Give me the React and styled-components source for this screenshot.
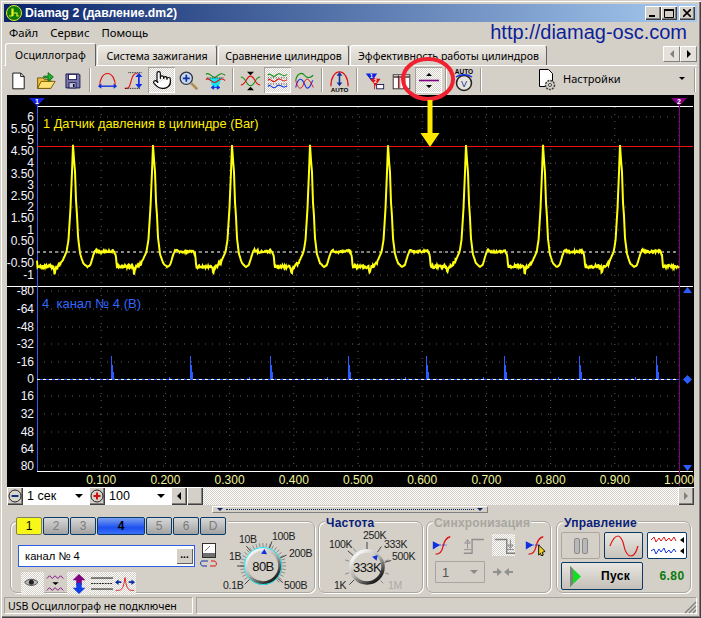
import React from "react";
import styled, { createGlobalStyle } from "styled-components";
import { Pointer } from "lucide-react";

const FACE = "#d4d0c8";
const DITHER = `repeating-conic-gradient(#ffffff 0 25%, ${FACE} 0 50%) 0 0 / 2px 2px`;
const UI_FONT = `"Noto Sans", "DejaVu Sans", sans-serif`;

const GlobalStyle = createGlobalStyle`
  html, body { margin: 0; padding: 0; background: ${FACE}; }
  * { box-sizing: border-box; }
`;

const Window = styled.div`
  position: relative;
  width: 701px;
  height: 618px;
  padding: 4px;
  display: flex;
  flex-direction: column;
  background: ${FACE};
  font-family: ${UI_FONT};
  font-size: 11px;
  color: #000;
  overflow: hidden;
  box-shadow: inset 1px 1px 0 ${FACE}, inset 2px 2px 0 #fff, inset -1px -1px 0 #404040, inset -2px -2px 0 #808080;
`;

const TitleBar = styled.div`
  height: 18px;
  flex: none;
  display: flex;
  align-items: center;
  padding: 0 2px;
  background: linear-gradient(90deg, #0a246a, #a6caf0);
  color: #fff;
  font-family: "Liberation Sans", sans-serif;
  font-weight: 700;
  font-size: 12.2px;
  gap: 3px;
`;

const TitleButtons = styled.div`
  margin-left: auto;
  display: flex;
`;

const CaptionButton = styled.div`
  width: 16px;
  height: 14px;
  margin-left: ${(p) => (p.$gap ? "2px" : "0")};
  display: flex;
  align-items: center;
  justify-content: center;
  background: ${FACE};
  box-shadow: inset 1px 1px 0 #fff, inset -1px -1px 0 #404040, inset -2px -2px 0 #808080;
`;

const MenuRow = styled.div`
  height: 21px;
  flex: none;
  display: flex;
  align-items: center;
  padding-left: 5px;
  gap: 12px;
  font-size: 11.3px;
`;

const Url = styled.div`
  margin-left: auto;
  margin-right: 10px;
  font-family: "Liberation Sans", sans-serif;
  font-size: 20px;
  color: #0c1f9a;
`;

const TabRow = styled.div`
  height: 23px;
  flex: none;
  display: flex;
  align-items: flex-end;
  padding-left: 1px;
  gap: 1px;
  border-bottom: 1px solid #fff;
`;

const Tab = styled.div`
  width: ${(p) => p.$w}px;
  height: ${(p) => (p.$active ? 23 : 20)}px;
  margin-bottom: ${(p) => (p.$active ? -1 : 0)}px;
  display: flex;
  align-items: center;
  justify-content: center;
  white-space: nowrap;
  font-size: 10.6px;
  letter-spacing: ${(p) => (p.$active ? 0.1 : 0)}px;
  background: ${(p) => (p.$active ? FACE : "linear-gradient(#ece9e2, #d4d0c8)")};
  border: 1px solid #fff;
  border-right-color: #606060;
  border-bottom: none;
  border-radius: 3px 3px 0 0;
  position: relative;
`;

const TabArrows = styled.div`
  margin-left: auto;
  margin-bottom: 3px;
  display: flex;
  height: 16px;
`;

const TabArrow = styled.div`
  width: 17px;
  height: 16px;
  background: #e4e1da;
  border: 1px solid #fff;
  border-right-color: #808080;
  border-bottom-color: #808080;
  display: flex;
  align-items: center;
  justify-content: center;
`;

const Toolbar = styled.div`
  height: 28px;
  flex: none;
  display: flex;
  align-items: center;
  padding-left: 1px;
`;

const ToolButton = styled.div`
  width: ${(p) => p.$w || 27}px;
  height: 26px;
  flex: none;
  display: flex;
  align-items: center;
  justify-content: center;
  background: ${(p) => (p.$on ? DITHER : "transparent")};
  box-shadow: ${(p) => (p.$on ? "inset 1px 1px 0 #a5a29b, inset -1px -1px 0 #fff" : "none")};
`;

const ToolSep = styled.div`
  width: 2px;
  height: 24px;
  flex: none;
  margin: 0 ${(p) => p.$m || 3}px;
  border-left: 1px solid #9d9a93;
  border-right: 1px solid #fff;
`;

const SettingsButton = styled.div`
  flex: 1;
  height: 26px;
  display: flex;
  align-items: center;
  padding: 0 8px 3px 49px;
  gap: 5px;
  font-size: 11px;
`;

const Caret = styled.div`
  margin-left: auto;
  width: 0;
  height: 0;
  border-left: ${(p) => (p.$big ? 4 : 3)}px solid transparent;
  border-right: ${(p) => (p.$big ? 4 : 3)}px solid transparent;
  border-top: ${(p) => (p.$big ? 4 : 3)}px solid #000;
`;

const ChartBox = styled.div`
  height: 392px;
  margin: 1px 0 0 3px;
  width: 687px;
  flex: none;
  background: #000;
`;

const ChartSvg = styled.svg`
  display: block;
`;

const ControlRow = styled.div`
  height: 18px;
  flex: none;
  margin-left: 3px;
  width: 687px;
  display: flex;
  background: ${DITHER};
`;

const RaisedButton = styled.div`
  width: ${(p) => p.$w || 16}px;
  height: 18px;
  flex: none;
  display: flex;
  align-items: center;
  justify-content: center;
  background: ${FACE};
  box-shadow: inset 1px 1px 0 #fff, inset -1px -1px 0 #404040, inset -2px -2px 0 #808080;
`;

const ComboBox = styled.div`
  width: 66px;
  height: 18px;
  flex: none;
  display: flex;
  align-items: center;
  padding: 0 6px 0 4px;
  background: #fff;
  font-size: 12.5px;
  font-family: "Liberation Sans", sans-serif;
`;

const Track = styled.div`
  flex: 1;
`;

const SplitterRow = styled.div`
  height: 8px;
  flex: none;
  display: flex;
  justify-content: center;
  margin-top: 1px;
`;

const Splitter = styled.div`
  width: 276px;
  height: 7px;
  margin-left: -2px;
  padding: 0 4px;
  display: flex;
  align-items: center;
  gap: 3px;
  border: 1px solid;
  border-color: #fff #808080 #808080 #fff;
`;

const SplitterDots = styled.div`
  flex: 1;
  height: 0;
  border-top: 1px dotted #0a246a;
`;

const SplitterMark = styled.div`
  width: 0;
  height: 0;
  border-left: 3px solid transparent;
  border-right: 3px solid transparent;
  border-top: 3px solid #0a246a;
`;

const GroupsRow = styled.div`
  flex: none;
  height: 83px;
  display: flex;
  padding: 7px 0 0 6px;
  gap: 3px;
`;

const Group = styled.div`
  width: ${(p) => p.$w}px;
  height: 72px;
  flex: none;
  border: 1px solid #aaa79f;
  border-radius: 7px;
  margin-right: ${(p) => p.$mr || 0}px;
  box-shadow: 1px 1px 0 #fff, inset 1px 1px 0 #fff;
`;

const GroupTitle = styled.div`
  width: fit-content;
  margin: -6px 0 0 6px;
  padding: 0 1px;
  height: 14px;
  line-height: 14px;
  font-family: "Liberation Sans", sans-serif;
  font-weight: 700;
  font-size: 12px;
  letter-spacing: 0.2px;
  background: ${FACE};
  color: ${(p) => (p.$off ? "#a9a69f" : "#0a1f78")};
`;

const ChannelGroupInner = styled.div`
  display: flex;
  height: 100%;
`;

const ChannelColumn = styled.div`
  width: 211px;
  flex: none;
`;

const ChannelTabs = styled.div`
  display: flex;
  gap: 1px;
  margin: -5px 0 0 5px;
  width: 212px;
  background: ${FACE};
`;

const ChannelButton = styled.div`
  width: ${(p) => (p.$wide ? 48 : 26)}px;
  height: 18px;
  flex: none;
  display: flex;
  align-items: center;
  justify-content: center;
  font-family: "Liberation Sans", sans-serif;
  font-size: 12px;
  font-weight: ${(p) => (p.$wide ? 700 : 400)};
  border: 1px solid ${(p) => (p.$yellow ? "#808060" : "#0a3a6a")};
  border-radius: 2px;
  color: ${(p) => (p.$yellow || p.$wide ? "#000" : "#7c7c7c")};
  background: ${(p) =>
    p.$yellow
      ? "#f8f818"
      : p.$wide
      ? "linear-gradient(#7aa0f0, #1c50f0 60%, #3c70f8)"
      : "linear-gradient(#d8d8d8, #a2a2a2)"};
`;

const InputRow = styled.div`
  display: flex;
  align-items: center;
  margin: 7px 0 0 7px;
  gap: 5px;
`;

const NameInput = styled.div`
  width: 177px;
  height: 22px;
  flex: none;
  display: flex;
  align-items: center;
  justify-content: space-between;
  padding: 1px 1px 1px 6px;
  background: #fff;
  border: 1px solid #2a5ce8;
  font-family: "Liberation Sans", sans-serif;
  font-size: 11.2px;
`;

const DotsButton = styled.div`
  width: 17px;
  height: 16px;
  display: flex;
  align-items: center;
  justify-content: center;
  padding-bottom: 4px;
  background: ${FACE};
  font-size: 10px;
  font-weight: 700;
  box-shadow: inset 1px 1px 0 #fff, inset -1px -1px 0 #606060;
`;

const ChannelIcons = styled.div`
  display: flex;
  margin: 2px 0 0 10px;
  gap: 0;
`;

const ChannelIcon = styled.div`
  width: 23px;
  height: 23px;
  display: flex;
  align-items: center;
  justify-content: center;
  background: ${(p) => (p.$on ? DITHER : "transparent")};
`;

const SyncIcons = styled.div`
  display: flex;
  align-items: center;
  gap: 8px;
  margin: 4px 0 0 0;
  padding-left: 3px;
`;

const SyncIcon = styled.div`
  width: 23px;
  height: 22px;
  display: flex;
  align-items: center;
  justify-content: center;
  background: ${(p) => (p.$on ? DITHER : "transparent")};
`;

const SyncRow = styled.div`
  display: flex;
  align-items: center;
  gap: 8px;
  margin: 5px 0 0 8px;
`;

const SyncSelect = styled.div`
  width: 50px;
  height: 22px;
  display: flex;
  align-items: center;
  justify-content: space-between;
  padding: 0 6px;
  border: 1px solid #a9a69f;
  font-family: "Liberation Sans", sans-serif;
  font-size: 13px;
  color: #555;
`;

const GreyCaret = styled.div`
  width: 0;
  height: 0;
  border-left: 4px solid transparent;
  border-right: 4px solid transparent;
  border-top: 4px solid #8a8a8a;
`;

const ControlGrid = styled.div`
  display: grid;
  grid-template-columns: 39px 39px 40px;
  column-gap: 4px;
  row-gap: 3px;
  margin: 2px 0 0 4px;
`;

const ModeButton = styled.div`
  height: 27px;
  display: flex;
  align-items: center;
  justify-content: center;
  border: 1px solid ${(p) => (p.$plain ? "#aaa79f" : "#0a3a6a")};
  border-radius: 2px;
  background: ${(p) => (p.$white ? "#fff" : p.$plain ? FACE : "linear-gradient(#e8e6e0, #c8c4bc)")};
`;

const StartButton = styled.div`
  grid-column: span 2;
  height: 28px;
  display: flex;
  align-items: center;
  border: 1px solid #0a3a6a;
  border-radius: 2px;
  padding-left: 8px;
  background: linear-gradient(#e8e6e0, #c4c0b8);
  font-family: "Liberation Sans", sans-serif;
  font-size: 12px;
  font-weight: 700;
  letter-spacing: 0.4px;
`;

const StartLabel = styled.span`
  margin-left: 20px;
`;

const Reading = styled.div`
  display: flex;
  align-items: center;
  justify-content: center;
  padding-left: 10px;
  font-family: "Liberation Sans", sans-serif;
  font-weight: 700;
  font-size: 12px;
  letter-spacing: 0.4px;
  color: #0a7a0a;
`;

const StatusBar = styled.div`
  height: 17px;
  flex: none;
  display: flex;
  gap: 3px;
  position: relative;
`;

const StatusPanel = styled.div`
  width: ${(p) => (p.$w ? `${p.$w}px` : "auto")};
  flex: ${(p) => (p.$w ? "none" : 1)};
  display: flex;
  align-items: center;
  padding-left: 3px;
  font-size: 10.6px;
  white-space: nowrap;
  border: 1px solid;
  border-color: #a5a29b #fff #fff #a5a29b;
`;

const Grip = styled.svg`
  position: absolute;
  right: 0;
  bottom: 0;
`;

const Overlay = styled.svg`
  position: absolute;
  left: 0;
  top: 0;
  pointer-events: none;
`;

// ---- chart data, all coordinates are page pixels, shapes are shifted by the box offset
const OX = 7;
const OY = 95;
const X0 = 37;
const X1 = 679;
const PEAKS = [73, 153, 232, 310, 388, 466, 543, 620];
const SPIKES = [111, 190, 270, 348, 426, 504, 579, 656];
const PERIOD = 78.5;

const SHAPE = [
  [0, 145], [1, 160], [2, 172], [3, 202], [4, 216], [5, 238], [7, 254], [10, 263], [14, 267],
  [17, 265], [20, 255], [22, 250], [27, 252], [40, 251], [42, 255], [43, 267], [52, 266],
  [59, 267], [60, 274], [61, 268], [67, 263], [72, 252], [74, 240], [76, 208], [77.5, 172], [78.5, 145],
];

function rnd(i) {
  const v = Math.sin(i * 12.9898) * 43758.5453;
  return v - Math.floor(v);
}

function shapeAt(t) {
  for (let i = 1; i < SHAPE.length; i++) {
    if (t <= SHAPE[i][0]) {
      const [a, ya] = SHAPE[i - 1];
      const [b, yb] = SHAPE[i];
      return ya + ((yb - ya) * (t - a)) / (b - a);
    }
  }
  return SHAPE[SHAPE.length - 1][1];
}

function phase(x) {
  if (x < PEAKS[0]) return PERIOD - (PEAKS[0] - x);
  for (let k = 0; k < PEAKS.length - 1; k++) {
    if (x < PEAKS[k + 1]) return ((x - PEAKS[k]) / (PEAKS[k + 1] - PEAKS[k])) * PERIOD;
  }
  return x - PEAKS[PEAKS.length - 1];
}

function pressureLine() {
  const pts = [];
  let n = 0;
  for (let x = X0; x <= X1; x += 0.5) {
    const t = phase(x);
    const noisy = t > 44 && t < 68 ? 3.4 : t > 22 && t < 42 ? 2 : 0.6;
    pts.push(`${x},${(shapeAt(t) + (rnd(n++) - 0.5) * noisy).toFixed(1)}`);
  }
  return pts.join(" ");
}

const PRESSURE = pressureLine();

const LEFT_TICKS = [
  ["6", 117], ["5.50", 129], ["5", 140], ["4.50", 151], ["4", 163], ["3.50", 174], ["3", 185], ["2.50", 196],
  ["2", 207], ["1.50", 218], ["1", 230], ["0.50", 241], ["0", 252], ["-0.50", 263], ["-1", 275],
];
const LOW_TICKS = [
  ["-80", 291], ["-64", 309], ["-48", 327], ["-32", 344], ["-16", 362], ["0", 379],
  ["16", 396], ["32", 414], ["48", 432], ["64", 449], ["80", 466],
];
const TIMES = [0.1, 0.2, 0.3, 0.4, 0.5, 0.6, 0.7, 0.8, 0.9, 1.0];

const AxisText = ({ x, y, children, anchor = "end", fill = "#f4f4ff" }) => (
  <text x={x - OX} y={y + 4 - OY} textAnchor={anchor} fill={fill} fontFamily="Liberation Sans, sans-serif" fontSize="12">
    {children}
  </text>
);

const Scope = () => (
  <ChartSvg width="687" height="392" viewBox="0 0 687 392">
    <g transform={`translate(${-OX} ${-OY})`}>
      {/* grid */}
      {TIMES.map((t) => {
        const x = X0 + 64.2 * (t * 10);
        return (
          <React.Fragment key={t}>
            <line x1={x} x2={x} y1="107" y2="285" stroke="#606060" strokeDasharray="1 6" />
            <line x1={x} x2={x} y1="288" y2="470" stroke="#606060" strokeDasharray="1 6" />
          </React.Fragment>
        );
      })}
      {LEFT_TICKS.filter((_, i) => i % 2 === 0).map(([, y]) => (
        <line key={y} x1={X0} x2={X1} y1={y} y2={y} stroke="#606060" strokeDasharray="1 6" />
      ))}
      {LOW_TICKS.map(([, y]) => (
        <line key={y} x1={X0} x2={X1} y1={y} y2={y} stroke="#606060" strokeDasharray="1 6" />
      ))}

      {/* frame lines */}
      <line x1={X0} x2="693" y1="106.5" y2="106.5" stroke="#fff" />
      <line x1="7" x2="693" y1="286.5" y2="286.5" stroke="#fff" />
      <line x1={X0} x2="693" y1="471.5" y2="471.5" stroke="#fff" />
      <line x1={X0 + 0.5} x2={X0 + 0.5} y1="100" y2="286" stroke="#2a5cff" />
      <line x1={X0 + 0.5} x2={X0 + 0.5} y1="286" y2="471" stroke="#2a5cff" />
      <line x1={X1 + 0.5} x2={X1 + 0.5} y1="100" y2="486" stroke="#800080" />

      {/* channel 1 */}
      <line x1={X0} x2={X1} y1="252" y2="252" stroke="#fff" strokeDasharray="3 3" />
      <line x1={X0} x2="693" y1="146.5" y2="146.5" stroke="#f01010" />
      <polyline points={PRESSURE} fill="none" stroke="#ffff10" strokeWidth="2" />

      {/* channel 4 */}
      <line x1={X0} x2={X1} y1="379.5" y2="379.5" stroke="#2a5cff" />
      <line x1={X0} x2={X1} y1="379.5" y2="379.5" stroke="#fff" strokeDasharray="3 3" />
      {SPIKES.map((x) => (
        <path
          key={x}
          d={`M${x + 0.5} 379V356M${x + 1.5} 379V365M${x + 2.5} 379V372M${x - 20.5} 379V377`}
          stroke="#2a5cff"
          fill="none"
        />
      ))}

      {/* markers */}
      <path d="M29 98h16l-8 8z" fill="#1020e0" />
      <path d="M671 98h16l-8 8z" fill="#800080" />
      <path d="M683 293l4.5-6 4.5 6z" fill="#2a5cff" />
      <path d="M687.5 375l4.5 4.5-4.5 4.5-4.5-4.5z" fill="#2a5cff" />
      <path d="M683 465h9l-4.5 6z" fill="#2a5cff" />
    </g>

    {/* axes */}
    {LEFT_TICKS.map(([t, y]) => (
      <AxisText key={t} x={34} y={y}>{t}</AxisText>
    ))}
    {LOW_TICKS.map(([t, y]) => (
      <AxisText key={t} x={34} y={y}>{t}</AxisText>
    ))}
    {TIMES.map((t) => (
      <AxisText key={t} x={X0 + 64.2 * (t * 10)} y={480} anchor="middle" fill="#f0f49c">
        {t.toFixed(3)}
      </AxisText>
    ))}
    <text x={43 - OX} y={128 - OY} fill="#fff000" fontFamily="Liberation Sans, sans-serif" fontSize="12.8">
      1 Датчик давления в цилиндре (Bar)
    </text>
    <text x={42 - OX} y={308 - OY} fill="#3366ff" fontFamily="Liberation Sans, sans-serif" fontSize="13" xmlSpace="preserve">
      4  канал № 4 (В)
    </text>
    <text x={37 - OX} y={104 - OY} textAnchor="middle" fill="#fff" fontSize="7" fontWeight="700" fontFamily="Liberation Sans, sans-serif">1</text>
    <text x={679 - OX} y={104 - OY} textAnchor="middle" fill="#fff" fontSize="7" fontWeight="700" fontFamily="Liberation Sans, sans-serif">2</text>
  </ChartSvg>
);

// ---- knobs
const polar = (cx, cy, r, deg) => {
  const a = ((deg - 90) * Math.PI) / 180;
  return [cx + r * Math.cos(a), cy + r * Math.sin(a)];
};

const Knob = ({ w, h, cx, cy, r, value, cyan, pointer, labels, long }) => {
  const ticks = [];
  for (let d = -135; d <= 135; d += 9) {
    const [x1, y1] = polar(cx, cy, r + 2, d);
    const [x2, y2] = polar(cx, cy, r + 6, d);
    ticks.push(<line key={d} x1={x1} y1={y1} x2={x2} y2={y2} stroke="#8a8a8a" />);
  }
  const [px, py] = polar(cx, cy, r - 3, pointer);
  return (
    <svg width={w} height={h} viewBox={`0 0 ${w} ${h}`}>
      <defs>
        <linearGradient id={`ring${r}`} x1="0.2" y1="0.1" x2="0.8" y2="0.9">
          <stop offset="0" stopColor="#f4f4f4" />
          <stop offset="0.5" stopColor="#b0aea8" />
          <stop offset="1" stopColor="#202020" />
        </linearGradient>
      </defs>
      {cyan && ticks}
      {long.map((d) => {
        const [x1, y1] = polar(cx, cy, r + 2, d);
        const [x2, y2] = polar(cx, cy, r + 9, d);
        return <line key={d} x1={x1} y1={y1} x2={x2} y2={y2} stroke="#444" />;
      })}
      {!cyan &&
        [-108, -72, -36, 36, 72, 108, 135].map((d) => {
          const [x1, y1] = polar(cx, cy, r + 3, d);
          const [x2, y2] = polar(cx, cy, r + 7, d);
          return <line key={d} x1={x1} y1={y1} x2={x2} y2={y2} stroke="#8a8a8a" />;
        })}
      <circle cx={cx} cy={cy} r={r} fill="none" stroke={`url(#ring${r})`} strokeWidth="3.5" />
      {cyan && <circle cx={cx} cy={cy} r={r + 1.5} fill="none" stroke="#20e8f0" />}
      <polygon
        points={`${px - 3},${py + 2} ${px + 3},${py + 2} ${px},${py - 3}`}
        fill="#1030e0"
        transform={`rotate(${pointer} ${px} ${py})`}
      />
      <text x={cx} y={cy + 5} textAnchor="middle" fontFamily="Liberation Sans, sans-serif" fontSize="13" letterSpacing="-0.6" fill="#111">
        {value}
      </text>
      {labels.map(([t, x, y, off]) => (
        <text key={t} x={x} y={y} fontFamily="Liberation Sans, sans-serif" fontSize="10.5" letterSpacing="-0.3" fill={off ? "#aaa" : "#222"}>
          {t}
        </text>
      ))}
    </svg>
  );
};

// ---- icons
const Ico = ({ s = 21, children }) => (
  <svg width={s} height={s} viewBox="0 0 24 24" fill="none">{children}</svg>
);

const IcoNew = () => (
  <Ico><path d="M5.5 3.5h9l4 4v14h-13z" fill="#fff" stroke="#000" /><path d="M14.5 3.5v4h4" stroke="#000" /></Ico>
);
const IcoOpen = () => (
  <Ico>
    <path d="M3 21V9h6l2 2h7v10z" fill="#f0c040" stroke="#6a4a00" />
    <path d="M3 21l4-8h16l-5 8z" fill="#ffe070" stroke="#6a4a00" />
    <path d="M10 7h5V3l6 5-6 5V9h-5z" fill="#20b030" stroke="#0a6a10" />
  </Ico>
);
const IcoSave = () => (
  <Ico>
    <path d="M4.5 4.5h15l1 1v15h-16z" fill="#7a78a8" stroke="#10104a" />
    <rect x="7.5" y="5" width="9" height="6" fill="#fff" stroke="#10104a" />
    <rect x="8" y="14.5" width="8" height="6" fill="#c8c8d8" stroke="#10104a" />
    <rect x="12.5" y="16" width="2" height="3.5" fill="#10104a" />
  </Ico>
);
const IcoArch = () => (
  <Ico>
    <path d="M3 19C3 10 7 4 12 4s9 6 9 15" stroke="#e01010" strokeWidth="1.3" />
    <path d="M3 18.5h18" stroke="#1030e0" strokeWidth="1.6" />
    <path d="M1 18.5l4-3v6zM23 18.5l-4-3v6z" fill="#1030e0" />
  </Ico>
);
const IcoSlope = () => (
  <Ico>
    <path d="M1 21c5 0 5-1 7-8s3-9 7-9" stroke="#e01010" strokeWidth="1.3" />
    <path d="M5 3h15M1 21h18" stroke="#000" strokeDasharray="1 1" />
    <path d="M17 7v10" stroke="#1030e0" strokeWidth="2" />
    <path d="M17 3l-4 5h8zM17 21l-4-5h8z" fill="#1030e0" />
  </Ico>
);
const IcoZoom = () => (
  <Ico>
    <circle cx="9.5" cy="9.5" r="7" fill="#c8d8f0" stroke="#303848" strokeWidth="1.5" />
    <path d="M5.5 9.5h8M9.5 5.5v8" stroke="#1030a0" strokeWidth="2" />
    <path d="M15 15l7 7" stroke="#b09050" strokeWidth="3" />
  </Ico>
);
const IcoBand = () => (
  <Ico>
    <path d="M5 9l4 11h6l4-11z" fill="#10e8f0" />
    <path d="M1 5c4-4 7 5 11 3s6-6 11-2" stroke="#109010" strokeWidth="1.2" />
    <path d="M1 11c4-4 7 5 11 3s6-6 11-2" stroke="#e01010" strokeWidth="1.2" />
    <path d="M2 9h20" stroke="#000" strokeDasharray="1 1" />
    <path d="M7 20h10M7 20l3-2v4zM17 20l-3-2v4z" stroke="#1030e0" fill="#1030e0" />
  </Ico>
);
const IcoCross = () => (
  <Ico>
    <path d="M1 8c6 0 6 10 11 10s5-10 11-10" stroke="#109010" strokeWidth="1.2" />
    <path d="M1 17c6 0 6-10 11-10s5 10 11 10" stroke="#e01010" strokeWidth="1.2" />
    <path d="M8 2h8l-4 4zM8 23h8l-4-4z" fill="#000" />
  </Ico>
);
const IcoThree = () => (
  <Ico>
    <path d="M1 6c3-4 5 3 8 1s4-4 7-2 4 2 7 0" stroke="#109010" strokeWidth="1.2" />
    <path d="M1 12c3-4 5 3 8 1s4-4 7-2 4 2 7 0" stroke="#e01010" strokeWidth="1.2" />
    <path d="M1 19c3-4 5 3 8 1s4-4 7-2 4 2 7 0" stroke="#1030e0" strokeWidth="1.2" />
    <path d="M1 9h22M1 16h22" stroke="#000" strokeDasharray="1 2" />
  </Ico>
);
const IcoOverlap = () => (
  <Ico>
    <path d="M2 12c1-8 7-10 10-6s7 3 10 0" stroke="#109010" strokeWidth="1.3" />
    <path d="M2 20c2-10 6-12 9-6s3 8 6 6 3-8 5-8" stroke="#1030e0" strokeWidth="1.3" />
    <path d="M2 12c3 12 7 10 9 4s5-10 11 4" stroke="#e01010" strokeWidth="1.1" />
  </Ico>
);
const IcoAuto = () => (
  <Ico s={23}>
    <path d="M3 18C3 9 7 3 12 3s9 6 9 15" stroke="#e01010" strokeWidth="1.3" />
    <path d="M12 5v11" stroke="#1030a0" strokeWidth="1.6" />
    <path d="M12 3l-3 4h6zM12 18l-3-4h6z" fill="#1030a0" />
    <text x="12" y="24" textAnchor="middle" fontSize="6.5" fontWeight="700" fontFamily="Liberation Sans, sans-serif" fill="#000">AUTO</text>
  </Ico>
);
const IcoFilter = () => (
  <Ico>
    <path d="M2 4h13l-6 9z" fill="#1020e0" />
    <path d="M7 10h12l-6 8z" fill="#e01010" />
    <path d="M12 9v13" stroke="#e01010" />
    <rect x="14.5" y="16.5" width="8" height="5" fill="#fff" stroke="#10104a" />
    <text x="8.5" y="9" textAnchor="middle" fontSize="6" fontWeight="700" fontFamily="Liberation Sans, sans-serif" fill="#fff">1</text>
    <text x="13" y="15" textAnchor="middle" fontSize="6" fontWeight="700" fontFamily="Liberation Sans, sans-serif" fill="#fff">2</text>
  </Ico>
);
const IcoTable = () => (
  <Ico>
    <rect x="2.5" y="5.5" width="19" height="16" fill="#fff" stroke="#202020" />
    <path d="M3 8h18" stroke="#502020" strokeWidth="1.6" />
    <path d="M8.5 6v15M14.5 6v15" stroke="#202020" />
    <path d="M10 9v12M16 9v12" stroke="#e01010" />
  </Ico>
);
const IcoLevel = () => (
  <Ico s={24}>
    <path d="M2 12.5h20" stroke="#800080" strokeWidth="1.6" />
    <path d="M9 8l3-3 3 3zM9 17l3 3 3-3z" fill="#000" />
  </Ico>
);
const IcoMeter = () => (
  <Ico s={24}>
    <text x="12" y="6" textAnchor="middle" fontSize="6.5" fontWeight="700" fontFamily="Liberation Sans, sans-serif" fill="#000">AUTO</text>
    <circle cx="12" cy="15" r="7.5" fill="#e8e4dc" stroke="#202020" strokeWidth="1.5" />
    <path d="M4 9c4-3 12-3 16 0" stroke="#1030e0" strokeWidth="1.4" />
    <text x="12" y="18.5" textAnchor="middle" fontSize="9" fontFamily="Liberation Sans, sans-serif" fill="#1030a0">V</text>
  </Ico>
);
const IcoSettings = () => (
  <Ico s={24}>
    <path d="M5.5 2.5h9l4 4v13h-13z" fill="#fff" stroke="#000" />
    <circle cx="16" cy="18" r="4.5" fill="#d4d0c8" stroke="#404040" strokeWidth="1.5" strokeDasharray="2 1" />
    <circle cx="16" cy="18" r="1.5" fill="#fff" stroke="#404040" />
  </Ico>
);
const IcoEye = () => (
  <Ico s={20}><path d="M2 10c4-5 12-5 16 0-4 5-12 5-16 0z" fill="#bbb" stroke="#303030" /><circle cx="10" cy="10" r="3" fill="#202020" /></Ico>
);
const IcoMode = () => (
  <Ico s={22}>
    <path d="M2 6l3-3 3 3 3-3 3 3 3-3 3 3" stroke="#800080" />
    <path d="M8 10h7l-3.5 3z" fill="#000" />
    <path d="M2 19l3-3 3 3 3-3 3 3 3-3 3 3" stroke="#800080" />
  </Ico>
);
const IcoUpDown = () => (
  <Ico s={22}>
    <path d="M12 1l-7 7h4v5h6V8h4z" fill="#800080" />
    <path d="M12 23l-7-7h4v-5h6v5h4z" fill="#1040e8" />
  </Ico>
);
const IcoLines = () => (
  <Ico s={22}>
    <path d="M0 5.5h24M0 17.5h24" stroke="#000" />
    <path d="M0 11.5h24" stroke="#000" strokeDasharray="2 1" />
  </Ico>
);
const IcoPeakArrows = () => (
  <Ico s={22}>
    <path d="M2 19c6 0 8 0 10-14 2 14 4 14 10 14" stroke="#e01010" />
    <path d="M1 10l4-3v2h3v2H5v2zM23 10l-4-3v2h-3v2h3v2z" fill="#1030a0" />
  </Ico>
);
const IcoGaugeSwap = () => (
  <svg width="18" height="28" viewBox="0 0 18 28" fill="none">
    <rect x="2.5" y="1.5" width="13" height="14" fill="#fff" stroke="#303030" />
    <rect x="3" y="11" width="12" height="4" fill="#707070" />
    <path d="M5 9l5-5" stroke="#808080" />
    <path d="M8 19H2c-2 0-2 5 1 5h4" stroke="#1030a0" />
    <path d="M10 24h5c2 0 2-5-1-5h-3" stroke="#e01010" />
  </svg>
);
const IcoTrigA = ({ dim }) => (
  <Ico s={22}>
    <path d="M5 22c5 0 7-3 8-8s3-10 8-11" stroke="#e01010" strokeWidth="1.4" />
    <path d="M2 8l8 4-8 5z" fill="#1030e0" />
    <path d="M8 12h10" stroke="#1030e0" strokeDasharray="1 1" />
    {dim && <path d="M16 12l7 7-3 1 1 3-2 1-1-3-2 2z" fill="#f0d020" stroke="#000" />}
  </Ico>
);
const IcoStepUp = () => (
  <Ico s={22}><path d="M2 21h9V6h13" stroke="#909090" strokeWidth="1.5" /><path d="M6 16v-9M3 10l3-4 3 4zM2 17h8" stroke="#909090" /></Ico>
);
const IcoStepDown = () => (
  <Ico s={22}><path d="M2 6h13v15h9" stroke="#808080" strokeWidth="1.5" /><path d="M19 6v9M16 12l3 4 3-4zM15 17h8" stroke="#808080" /></Ico>
);
const IcoConverge = () => (
  <svg width="20" height="10" viewBox="0 0 20 10"><path d="M0 5h8M12 5h8" stroke="#909090" strokeWidth="2" /><path d="M9 5L4 1v8zM11 5l5-4v8z" fill="#909090" /></svg>
);
const IcoPause = () => (
  <svg width="14" height="18" viewBox="0 0 14 18" fill="none">
    <rect x="0.5" y="1.5" width="5" height="15" rx="1.5" fill="#b8b8b8" stroke="#8a8a8a" />
    <rect x="8.5" y="1.5" width="5" height="15" rx="1.5" fill="#b8b8b8" stroke="#8a8a8a" />
  </svg>
);
const IcoSine = () => (
  <svg width="30" height="22" viewBox="0 0 30 22" fill="none">
    <path d="M1 11c3-8 6-10 8-10s5 4 6 10 4 10 7 10 5-3 7-10" stroke="#e01010" strokeWidth="1.2" />
  </svg>
);
const IcoDualWave = () => (
  <svg width="34" height="24" viewBox="0 0 34 24" fill="none">
    <path d="M1 6l3-3 2 5 3-4 2 3 3-4 2 4 3-3 2 3 3-4 2 4" stroke="#e01010" />
    <path d="M1 17l3-2 2 5 3-5 2 3 3-4 2 5 3-3 2 3 3-4 2 3" stroke="#1030e0" />
    <path d="M34 3l-4 3 4 3zM34 14l-4 3 4 3z" fill="#000" />
  </svg>
);
const IcoPlay = () => (
  <svg width="11" height="21" viewBox="0 0 11 21"><path d="M0 0l11 10.5L0 21z" fill="#10e020" /><path d="M0 0v21l3-3V3z" fill="#808080" /></svg>
);
const Arrow = ({ dir, dim }) => (
  <svg width="6" height="8" viewBox="0 0 6 8">
    <path d={dir === "left" ? "M5 0v8L1 4z" : "M1 0v8l4-4z"} fill={dim ? "#808080" : "#000"} />
  </svg>
);

const Round = ({ color }) => (
  <svg width="14" height="14" viewBox="0 0 14 14" fill="none">
    <circle cx="7" cy="7" r="6" fill="#d8d4cc" stroke="#202020" />
    {color === "red" ? (
      <path d="M3.5 7h7M7 3.5v7" stroke="#d01010" strokeWidth="2" />
    ) : (
      <path d="M3.5 7h7" stroke="#103080" strokeWidth="2" />
    )}
  </svg>
);

const App = () => (
  <Window>
    <GlobalStyle />
    <TitleBar>
      <svg width="16" height="16" viewBox="0 0 16 16" fill="none">
        <circle cx="8" cy="8" r="7.5" fill="#0a7a0a" stroke="#e8e820" />
        <path d="M3 11h3V4h1v7h0M7 8h4v3h2" stroke="#f0f020" strokeWidth="1.2" />
      </svg>
      Diamag 2 (давление.dm2)
      <TitleButtons>
        <CaptionButton>
          <svg width="8" height="8"><path d="M0 6h6v2H0z" fill="#000" /></svg>
        </CaptionButton>
        <CaptionButton>
          <svg width="10" height="9"><path d="M.5 1.5h9v7h-9z" fill="none" stroke="#000" /><path d="M0 0h10v2H0z" fill="#000" /></svg>
        </CaptionButton>
        <CaptionButton $gap>
          <svg width="8" height="8"><path d="M0 0l8 8M8 0L0 8" stroke="#000" strokeWidth="1.6" /></svg>
        </CaptionButton>
      </TitleButtons>
    </TitleBar>

    <MenuRow>
      <span>Файл</span>
      <span>Сервис</span>
      <span>Помощь</span>
      <Url>http://diamag-osc.com</Url>
    </MenuRow>

    <TabRow>
      <Tab $active $w={91}>Осциллограф</Tab>
      <Tab $w={120}>Система зажигания</Tab>
      <Tab $w={131}>Сравнение цилиндров</Tab>
      <Tab $w={197}>Эффективность работы цилиндров</Tab>
      <TabArrows>
        <TabArrow><Arrow dir="left" dim /></TabArrow>
        <TabArrow><Arrow dir="right" /></TabArrow>
      </TabArrows>
    </TabRow>

    <Toolbar>
      <ToolButton><IcoNew /></ToolButton>
      <ToolButton><IcoOpen /></ToolButton>
      <ToolButton><IcoSave /></ToolButton>
      <ToolSep />
      <ToolButton><IcoArch /></ToolButton>
      <ToolButton><IcoSlope /></ToolButton>
      <ToolButton $on><Pointer size={20} fill="#fff" color="#000" strokeWidth={1.4} /></ToolButton>
      <ToolButton><IcoZoom /></ToolButton>
      <ToolButton><IcoBand /></ToolButton>
      <ToolSep />
      <ToolButton><IcoCross /></ToolButton>
      <ToolButton $on><IcoThree /></ToolButton>
      <ToolButton><IcoOverlap /></ToolButton>
      <ToolSep />
      <ToolButton><IcoAuto /></ToolButton>
      <ToolSep />
      <ToolButton><IcoFilter /></ToolButton>
      <ToolButton><IcoTable /></ToolButton>
      <ToolButton $on><IcoLevel /></ToolButton>
      <ToolSep />
      <ToolButton><IcoMeter /></ToolButton>
      <ToolSep />
      <SettingsButton>
        <IcoSettings />
        Настройки
        <Caret />
      </SettingsButton>
      <ToolSep $m={1} />
    </Toolbar>

    <ChartBox>
      <Scope />
    </ChartBox>

    <ControlRow>
      <RaisedButton><Round /></RaisedButton>
      <ComboBox>1 сек<Caret $big /></ComboBox>
      <RaisedButton><Round color="red" /></RaisedButton>
      <ComboBox>100<Caret $big /></ComboBox>
      <RaisedButton><Arrow dir="left" /></RaisedButton>
      <RaisedButton />
      <Track />
      <RaisedButton><Arrow dir="right" dim /></RaisedButton>
    </ControlRow>

    <SplitterRow>
      <Splitter>
        <SplitterMark />
        <SplitterDots />
        <SplitterMark />
      </Splitter>
    </SplitterRow>

    <GroupsRow>
      <Group $w={305}>
        <ChannelGroupInner>
          <ChannelColumn>
            <ChannelTabs>
              <ChannelButton $yellow>1</ChannelButton>
              <ChannelButton>2</ChannelButton>
              <ChannelButton>3</ChannelButton>
              <ChannelButton $wide>4</ChannelButton>
              <ChannelButton>5</ChannelButton>
              <ChannelButton>6</ChannelButton>
              <ChannelButton>D</ChannelButton>
            </ChannelTabs>
            <InputRow>
              <NameInput>
                канал № 4
                <DotsButton>...</DotsButton>
              </NameInput>
              <IcoGaugeSwap />
            </InputRow>
            <ChannelIcons>
              <ChannelIcon $on><IcoEye /></ChannelIcon>
              <ChannelIcon><IcoMode /></ChannelIcon>
              <ChannelIcon $on><IcoUpDown /></ChannelIcon>
              <ChannelIcon $on><IcoLines /></ChannelIcon>
              <ChannelIcon $on><IcoPeakArrows /></ChannelIcon>
            </ChannelIcons>
          </ChannelColumn>
          <Knob
            w={92}
            h={70}
            cx={41}
            cy={44}
            r={17}
            cyan
            value="80B"
            pointer={5}
            long={[-135, -90, -40, 20, 65, 130]}
            labels={[
              ["0.1B", 1, 67], ["1B", 7, 38], ["10B", 17, 21], ["100B", 50, 18], ["200B", 67, 35], ["500B", 62, 67],
            ]}
          />
        </ChannelGroupInner>
      </Group>

      <Group $w={105}>
        <GroupTitle>Частота</GroupTitle>
        <Knob
          w={103}
          h={62}
          cx={48}
          cy={37}
          r={16}
          value="333K"
          pointer={42}
          long={[-135, -50, 0, 35, 75]}
          labels={[
            ["100K", 10, 18], ["250K", 44, 9], ["333K", 65, 18], ["500K", 73, 30], ["1K", 15, 59], ["1M", 69, 59, true],
          ]}
        />
      </Group>

      <Group $w={125} $mr={2}>
        <GroupTitle $off>Синхронизация</GroupTitle>
        <SyncIcons>
          <SyncIcon><IcoTrigA /></SyncIcon>
          <SyncIcon><IcoStepUp /></SyncIcon>
          <SyncIcon $on><IcoStepDown /></SyncIcon>
          <SyncIcon><IcoTrigA dim /></SyncIcon>
        </SyncIcons>
        <SyncRow>
          <SyncSelect>1<GreyCaret /></SyncSelect>
          <IcoConverge />
        </SyncRow>
      </Group>

      <Group $w={135}>
        <GroupTitle>Управление</GroupTitle>
        <ControlGrid>
          <ModeButton $plain><IcoPause /></ModeButton>
          <ModeButton><IcoSine /></ModeButton>
          <ModeButton $white><IcoDualWave /></ModeButton>
          <StartButton>
            <IcoPlay />
            <StartLabel>Пуск</StartLabel>
          </StartButton>
          <Reading>6.80</Reading>
        </ControlGrid>
      </Group>
    </GroupsRow>

    <StatusBar>
      <StatusPanel $w={189}>USB Осциллограф не подключен</StatusPanel>
      <StatusPanel />
      <Grip width="14" height="14" viewBox="0 0 14 14">
        <path d="M13 2L2 13M13 6L6 13M13 10l-3 3" stroke="#808080" strokeWidth="1.4" />
      </Grip>
    </StatusBar>

    <Overlay width="701" height="618" viewBox="0 0 701 618">
      <defs>
        <filter id="soft"><feGaussianBlur stdDeviation="0.7" /></filter>
      </defs>
      <ellipse cx="428" cy="79" rx="25" ry="20" fill="none" stroke="#f02030" strokeWidth="4" filter="url(#soft)" />
      <path d="M427.5 100h5v33h7l-9.5 14-9.5-14h7z" fill="#ffe800" />
    </Overlay>
  </Window>
);

export default App;
